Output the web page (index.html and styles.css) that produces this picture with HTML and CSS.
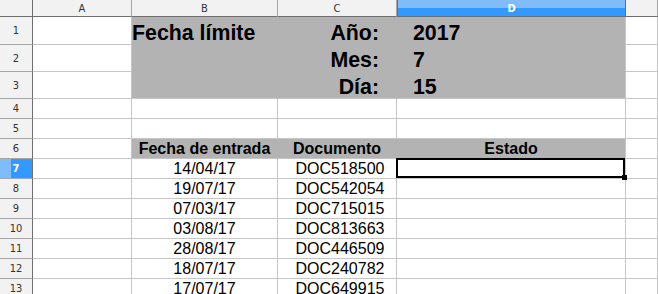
FILE: index.html
```html
<!DOCTYPE html>
<html lang="es">
<head>
    <meta charset="UTF-8">
    <title>Fecha límite</title>
    <link rel="stylesheet" href="styles.css">
</head>
<body>
    <div class="hoja">
        <!-- cabecera de columnas -->
        <div class="esquina"></div>
        <div class="col">A</div>
        <div class="col">B</div>
        <div class="col">C</div>
        <div class="col sel">D</div>
        <div class="col"></div>

        <!-- fila 1 -->
        <div class="fila">1</div>
        <div class="celda"></div>
        <div class="celda gris titulo">Fecha límite</div>
        <div class="celda gris etiqueta">Año:</div>
        <div class="celda gris valor fin-col">2017</div>
        <div class="celda"></div>

        <!-- fila 2 -->
        <div class="fila">2</div>
        <div class="celda"></div>
        <div class="celda gris"></div>
        <div class="celda gris etiqueta">Mes:</div>
        <div class="celda gris valor fin-col">7</div>
        <div class="celda"></div>

        <!-- fila 3 -->
        <div class="fila">3</div>
        <div class="celda"></div>
        <div class="celda gris fin-fila"></div>
        <div class="celda gris etiqueta fin-fila">Día:</div>
        <div class="celda gris valor fin-col fin-fila">15</div>
        <div class="celda"></div>

        <div class="fila">4</div>
        <div class="celda"></div>
        <div class="celda"></div>
        <div class="celda"></div>
        <div class="celda"></div>
        <div class="celda"></div>

        <div class="fila">5</div>
        <div class="celda"></div>
        <div class="celda"></div>
        <div class="celda"></div>
        <div class="celda"></div>
        <div class="celda"></div>

        <!-- encabezados de la tabla -->
        <div class="fila">6</div>
        <div class="celda"></div>
        <div class="celda gris cabecera fin-fila">Fecha de entrada</div>
        <div class="celda gris cabecera fin-fila">Documento</div>
        <div class="celda gris cabecera fin-col fin-fila">Estado</div>
        <div class="celda"></div>

        <div class="fila sel">7</div>
        <div class="celda"></div>
        <div class="celda dato">14/04/17</div>
        <div class="celda dato doc">DOC518500</div>
        <div class="celda cursor"></div>
        <div class="celda"></div>

        <div class="fila">8</div>
        <div class="celda"></div>
        <div class="celda dato">19/07/17</div>
        <div class="celda dato doc">DOC542054</div>
        <div class="celda"></div>
        <div class="celda"></div>

        <div class="fila">9</div>
        <div class="celda"></div>
        <div class="celda dato">07/03/17</div>
        <div class="celda dato doc">DOC715015</div>
        <div class="celda"></div>
        <div class="celda"></div>

        <div class="fila">10</div>
        <div class="celda"></div>
        <div class="celda dato">03/08/17</div>
        <div class="celda dato doc">DOC813663</div>
        <div class="celda"></div>
        <div class="celda"></div>

        <div class="fila">11</div>
        <div class="celda"></div>
        <div class="celda dato">28/08/17</div>
        <div class="celda dato doc">DOC446509</div>
        <div class="celda"></div>
        <div class="celda"></div>

        <div class="fila">12</div>
        <div class="celda"></div>
        <div class="celda dato">18/07/17</div>
        <div class="celda dato doc">DOC240782</div>
        <div class="celda"></div>
        <div class="celda"></div>

        <div class="fila">13</div>
        <div class="celda"></div>
        <div class="celda dato">17/07/17</div>
        <div class="celda dato doc">DOC649915</div>
        <div class="celda"></div>
        <div class="celda"></div>
    </div>
</body>
</html>
```
FILE: styles.css
```css
body {
    margin: 0;
    background-color: #ffffff;
    overflow: hidden;
    font-family: "Liberation Sans", Arial, sans-serif;
}

.hoja {
    display: grid;
    grid-template-columns: 33px 99px 146px 119px 229px 1fr;
    grid-template-rows: 17px 28px 27px 27px repeat(10, 20px);
}

.hoja div {
    box-sizing: border-box;
    display: flex;
    white-space: nowrap;
}

/* cabeceras de filas y columnas */
.esquina,
.col,
.fila {
    background-color: #f2f2f2;
    color: #333333;
    font-family: "DejaVu Sans", sans-serif;
    font-stretch: condensed;
    font-size: 11px;
    align-items: center;
    justify-content: center;
}

.esquina {
    border-right: 1px solid #6e6e6e;
    border-bottom: 1px solid #6e6e6e;
}

.col {
    border-right: 1px solid #a6a6a6;
    border-bottom: 1px solid #6e6e6e;
}

.fila {
    border-right: 1px solid #6e6e6e;
    border-bottom: 1px solid #a6a6a6;
}

.col.sel {
    background: linear-gradient(#80bcfa 0, #80bcfa 8px, #3399ff 8px);
    border-left: 1px solid #1f7fe0;
    border-right-color: #1f7fe0;
    color: #ffffff;
    font-weight: bold;
}

.fila.sel {
    background: linear-gradient(to right, #80bcfa 0, #80bcfa 11px, #3399ff 11px);
    color: #ffffff;
    font-weight: bold;
}

/* celdas */
.celda {
    border-right: 1px solid #c6c6c6;
    border-bottom: 1px solid #c6c6c6;
    align-items: flex-end;
    color: #000000;
}

.gris {
    background-color: #b3b3b3;
    border-right-color: #b3b3b3;
    border-bottom-color: #b3b3b3;
}

.gris.fin-col {
    border-right-color: #c6c6c6;
}

.gris.fin-fila {
    border-bottom-color: #c6c6c6;
}

.titulo,
.etiqueta,
.valor {
    font-size: 21.33px;
    font-weight: bold;
    line-height: 1;
}

.etiqueta {
    justify-content: flex-end;
    padding-right: 17px;
}

.valor {
    padding-left: 16px;
}

.cabecera {
    font-size: 16px;
    font-weight: bold;
    justify-content: center;
}

.dato {
    font-size: 16px;
    justify-content: center;
}

.dato.doc {
    padding-left: 6px;
}

/* cursor de celda activa */
.cursor {
    position: relative;
}

.cursor::after {
    content: "";
    position: absolute;
    left: -1px;
    top: -1px;
    right: 0;
    bottom: 0;
    border: 2px solid #000000;
}

.cursor::before {
    content: "";
    position: absolute;
    right: -2px;
    bottom: -2px;
    width: 5px;
    height: 5px;
    background-color: #000000;
    z-index: 1;
}
```
